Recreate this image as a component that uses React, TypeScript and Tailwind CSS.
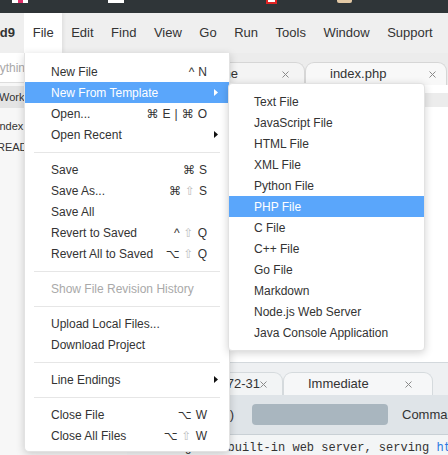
import React from "react";

type Entry =
  | "sep"
  | {
      label: string;
      keys?: string;
      arrow?: boolean;
      active?: boolean;
      disabled?: boolean;
    };

const FILE_MENU: Entry[] = [
  { label: "New File", keys: "^ N" },
  { label: "New From Template", arrow: true, active: true },
  { label: "Open...", keys: "⌘ E | ⌘ O" },
  { label: "Open Recent", arrow: true },
  "sep",
  { label: "Save", keys: "⌘ S" },
  { label: "Save As...", keys: "⌘ ⇧ S" },
  { label: "Save All" },
  { label: "Revert to Saved", keys: "^ ⇧ Q" },
  { label: "Revert All to Saved", keys: "⌥ ⇧ Q" },
  "sep",
  { label: "Show File Revision History", disabled: true },
  "sep",
  { label: "Upload Local Files..." },
  { label: "Download Project" },
  "sep",
  { label: "Line Endings", arrow: true },
  "sep",
  { label: "Close File", keys: "⌥ W" },
  { label: "Close All Files", keys: "⌥ ⇧ W" },
];

const TEMPLATES = [
  "Text File",
  "JavaScript File",
  "HTML File",
  "XML File",
  "Python File",
  "PHP File",
  "C File",
  "C++ File",
  "Go File",
  "Markdown",
  "Node.js Web Server",
  "Java Console Application",
];

const MENUBAR = ["Edit", "Find", "View", "Go", "Run", "Tools", "Window", "Support"];

function Keys({ text }: { text: string }) {
  return (
    <span className="flex items-center gap-[4px]">
      {text.split(" ").map((k, i) => (
        <span key={i} className={k === "⇧" ? "text-[#bdbdbd]" : ""}>
          {k}
        </span>
      ))}
    </span>
  );
}

function Caret({ white }: { white?: boolean }) {
  return (
    <svg width="4" height="7" viewBox="0 0 4 7">
      <polygon points="0,0 4,3.5 0,7" fill={white ? "#ffffff" : "#111111"} />
    </svg>
  );
}

function CloseX({ color = "#8a8a8a" }: { color?: string }) {
  return (
    <svg width="7" height="7" viewBox="0 0 7 7" className="shrink-0">
      <path d="M0.5 0.5L6.5 6.5M6.5 0.5L0.5 6.5" stroke={color} strokeWidth="1" />
    </svg>
  );
}

function MenuRow({ entry }: { entry: Exclude<Entry, "sep"> }) {
  const tone = entry.active
    ? "bg-[#5aa6fb] text-white"
    : entry.disabled
      ? "text-[#a9a9a9]"
      : "text-[#333333]";
  return (
    <div
      className={`flex h-[21px] items-center pl-[26px] ${entry.arrow ? "pr-[11px]" : "pr-[22px]"} ${tone}`}
    >
      <span className="flex-1 whitespace-nowrap">{entry.label}</span>
      {entry.keys && <Keys text={entry.keys} />}
      {entry.arrow && <Caret white={entry.active} />}
    </div>
  );
}

export default function App() {
  return (
    <div className="relative h-[455px] w-[448px] overflow-hidden bg-white font-['Liberation_Sans','DejaVu_Sans',sans-serif] text-[#333333]">
      {/* browser chrome remnant */}
      <div className="flex h-[13px] items-start bg-[#2f3538]">
        <div className="ml-[12px] flex h-[3px] w-[16px] justify-center bg-white">
          <div className="h-[3px] w-[5px] bg-[#e0306a]" />
        </div>
        <div className="ml-[80px] h-[3px] w-[16px] bg-white" />
        <div className="ml-[142px] h-[4px] w-[11px] border-x-2 border-b-2 border-[#e02424] bg-white" />
        <div className="ml-[60px] h-[3px] w-[15px] rounded-b-[2px] bg-[#e3c9a6]" />
      </div>

      {/* menu bar */}
      <div className="flex h-[40px] items-stretch bg-[#efefef] text-[13px]">
        <div className="flex w-[24px] items-center">
          <div className="flex w-[15px] justify-end overflow-hidden font-bold">
            <span className="whitespace-nowrap">Cloud9</span>
          </div>
        </div>
        <div className="flex items-center bg-white px-[8.75px] shadow-[2px_0_3px_rgba(0,0,0,0.06)]">
          File
        </div>
        {MENUBAR.map((m) => (
          <div key={m} className="flex items-center px-[8.75px]">
            {m}
          </div>
        ))}
      </div>

      {/* workspace behind the menus */}
      <div className="flex h-[402px]">
        {/* sidebar */}
        <div className="flex w-[127px] shrink-0 flex-col overflow-hidden bg-[#f7f7f7] text-[11px]">
          <div className="flex h-[30px] items-center border-b border-[#dddddd] bg-white text-[12px] text-[#a8a8a8]">
            <span className="ml-[-47px] whitespace-nowrap">Go to Anything (⌘ E)</span>
          </div>
          <div className="mt-[3px] flex h-[22px] items-center bg-[#e4e4e4]">
            <span className="ml-[-1px] whitespace-nowrap">Workspace</span>
          </div>
          <div className="mt-[8px] flex h-[21px] items-center">
            <span className="ml-[-3px] whitespace-nowrap">index.php</span>
          </div>
          <div className="flex h-[21px] items-center">
            <span className="ml-[-3px] whitespace-nowrap">README.md</span>
          </div>
        </div>

        {/* main column */}
        <div className="flex min-w-0 flex-1 flex-col overflow-hidden">
          {/* editor tabs */}
          <div className="flex h-[32px] shrink-0 items-end bg-[#ececec] text-[13px]">
            <div className="flex h-[23px] w-[178px] shrink-0 items-center justify-between rounded-t-[9px] border border-b-0 border-[#d6d6d6] bg-[#f4f4f4] pl-[56px] pr-[15px]">
              <span>Welcome</span>
              <CloseX />
            </div>
            <div className="flex h-[23px] w-[142px] shrink-0 items-center justify-between rounded-t-[9px] border border-b-0 border-[#d6d6d6] bg-[#f8f8f8] pl-[24px] pr-[10px]">
              <span>index.php</span>
              <CloseX />
            </div>
          </div>

          {/* editor */}
          <div className="flex flex-1 flex-col bg-white pt-[8px]">
            <div className="h-[14px] bg-[#ececec]" />
          </div>

          {/* bottom console */}
          <div className="flex h-[93px] shrink-0 flex-col border-t border-[#d3d8dc]">
            <div className="flex h-[32px] items-end bg-[#eef0f2] text-[13px]">
              <div className="flex h-[23px] w-[156px] shrink-0 items-center justify-end overflow-hidden rounded-t-[9px] border border-b-0 border-[#d5dadd] bg-[#f2f4f5] pr-[15px]">
                <span className="whitespace-nowrap">bash - "ip-172-31</span>
                <CloseX />
              </div>
              <div className="flex h-[23px] w-[150px] shrink-0 items-center justify-between rounded-t-[9px] border border-b-0 border-[#d5dadd] bg-[#f6f7f8] pl-[24px] pr-[20px]">
                <span>Immediate</span>
                <CloseX />
              </div>
            </div>
            <div className="flex h-[40px] items-center overflow-hidden border-b border-[#c9d0d5] bg-[#dfe4e8] text-[13px]">
              <div className="flex w-[107px] shrink-0 justify-end overflow-hidden">
                <span className="whitespace-nowrap">Runner: PHP (built-in)</span>
              </div>
              <div className="ml-[18px] h-[21px] w-[136px] shrink-0 rounded-[4px] bg-[#a9b6bf]" />
              <span className="ml-[14px] shrink-0 whitespace-nowrap">Command:</span>
            </div>
            <div className="flex-1 overflow-hidden bg-[#f3f5f6] pl-[7px] pt-[4px] font-['Liberation_Mono',monospace] text-[12px] whitespace-nowrap">
              Starting PHP built-in web server, serving{" "}
              <span className="text-[#2a7ae2]">https://</span>
            </div>
          </div>
        </div>
      </div>

      {/* File menu */}
      <div className="absolute left-[24px] top-[53px] w-[206px] rounded-b-[5px] border-x border-b border-[#e2e2e2] bg-white pb-[5px] pt-[8px] text-[12px] shadow-[0_2px_8px_rgba(0,0,0,0.18)]">
        {FILE_MENU.map((e, i) =>
          e === "sep" ? (
            <div key={i} className="flex h-[14px] items-center px-[9px]">
              <div className="h-px flex-1 bg-[#e6e6e6]" />
            </div>
          ) : (
            <MenuRow key={i} entry={e} />
          ),
        )}
      </div>

      {/* New From Template submenu */}
      <div className="absolute left-[228px] top-[83px] w-[197px] rounded-[4px] border border-[#e2e2e2] bg-white pb-[7px] pt-[7px] text-[12px] shadow-[0_2px_8px_rgba(0,0,0,0.18)]">
        {TEMPLATES.map((t) => (
          <div
            key={t}
            className={`flex h-[21px] items-center pl-[25px] ${t === "PHP File" ? "bg-[#5aa6fb] text-white" : "text-[#333333]"}`}
          >
            {t}
          </div>
        ))}
      </div>
    </div>
  );
}
